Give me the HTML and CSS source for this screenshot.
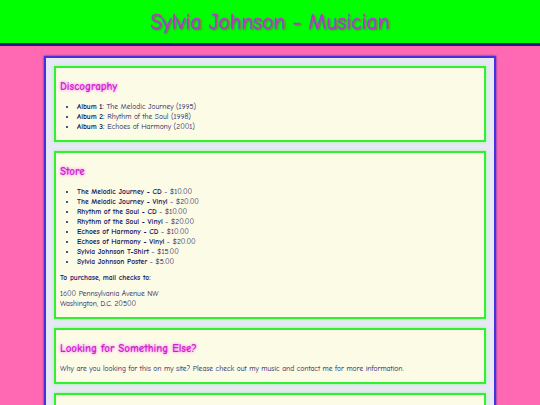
FILE: index.html
```html
<!DOCTYPE html>
<html lang="en">
<head>
  <meta charset="UTF-8">
  <meta name="viewport" content="width=device-width, initial-scale=1.0">
  <title>Sylvia Johnson - Musician</title>
  <link rel="stylesheet" href="styles.css">
</head>
<body>
  <header class="site-header">
    <h1>Sylvia Johnson - Musician</h1>
  </header>

  <main class="page">
    <section class="box">
      <h2>Discography</h2>
      <ul>
        <li><b>Album 1:</b> The Melodic Journey (1995)</li>
        <li><b>Album 2:</b> Rhythm of the Soul (1998)</li>
        <li><b>Album 3:</b> Echoes of Harmony (2001)</li>
      </ul>
    </section>

    <section class="box">
      <h2>Store</h2>
      <ul>
        <li><b>The Melodic Journey - CD</b> - $10.00</li>
        <li><b>The Melodic Journey - Vinyl</b> - $20.00</li>
        <li><b>Rhythm of the Soul - CD</b> - $10.00</li>
        <li><b>Rhythm of the Soul - Vinyl</b> - $20.00</li>
        <li><b>Echoes of Harmony - CD</b> - $10.00</li>
        <li><b>Echoes of Harmony - Vinyl</b> - $20.00</li>
        <li><b>Sylvia Johnson T-Shirt</b> - $15.00</li>
        <li><b>Sylvia Johnson Poster</b> - $5.00</li>
      </ul>
      <p><b>To purchase, mail checks to:</b></p>
      <p>1600 Pennsylvania Avenue NW<br>Washington, D.C. 20500</p>
    </section>

    <section class="box">
      <h2>Looking for Something Else?</h2>
      <p>Why are you looking for this on my site? Please check out my music and contact me for more information.</p>
    </section>

    <section class="box contact">
      <h2>Contact</h2>
      <p>Email: sylvia@example.com</p>
    </section>
  </main>
</body>
</html>
```

FILE: styles.css
```css
body {
  font-family: 'Comic Sans MS', 'Comic Neue', 'DejaVu Sans', sans-serif;
  margin: 0;
  padding: 0;
  background-color: #ff69b4;
  color: #161660;
}

.site-header {
  background-color: #00ff00;
  border-bottom: 3px solid #1a1a80;
  height: 43px;
  display: flex;
  align-items: center;
  justify-content: center;
}

.site-header h1 {
  margin: 0;
  font-size: 21.5px;
  font-weight: normal;
  -webkit-text-stroke: 0.4px #b838cc;
  color: #b838cc;
  text-shadow: 1px 1px 2px #555;
}

.page {
  width: 432px;
  margin: 10px auto 0;
  padding: 8px 8px 1px;
  background-color: #e8e8f6;
  border: 2px solid #4433dd;
  box-shadow: 0 0 2px #3322aa;
}

.box {
  background-color: #fbfbe6;
  border: 2px solid #33ee33;
  box-shadow: 0 0 3px #88ff88;
  padding: 4px 4px 2px;
  margin-bottom: 9px;
}

/* last box only peeks in at the bottom */
.box.contact {
  padding-top: 12px;
}

.box h2 {
  font-size: 11px;
  line-height: 16px;
  margin: 7px 0;
  color: #cc22cc;
  text-shadow: 0 0 3px #ff55ff;
}

.box ul {
  margin: 7px 0 6px;
  padding-left: 17px;
}

.box li,
.box p {
  font-size: 7.5px;
  line-height: 10px;
}

.box p {
  margin: 6px 0;
}
```
